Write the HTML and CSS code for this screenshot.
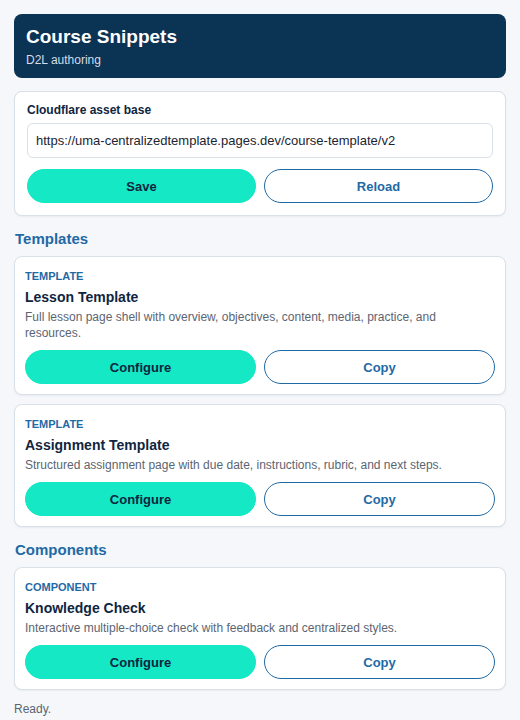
FILE: index.html
```html
<!DOCTYPE html>
<html lang="en">
<head>
<meta charset="utf-8">
<title>Course Snippets</title>
<link rel="stylesheet" href="styles.css">
</head>
<body>
<main class="app">
  <header class="hero">
    <h1 class="hero-title">Course Snippets</h1>
    <p class="hero-sub">D2L authoring</p>
  </header>

  <section class="card config">
    <label class="field-label" for="base">Cloudflare asset base</label>
    <input class="field-input" id="base" type="text" value="https://uma-centralizedtemplate.pages.dev/course-template/v2">
    <div class="actions">
      <button class="btn btn-primary">Save</button>
      <button class="btn btn-outline">Reload</button>
    </div>
  </section>

  <h2 class="section-title">Templates</h2>
  <div class="list">
    <article class="card item">
      <div class="kind">TEMPLATE</div>
      <h3 class="item-title">Lesson Template</h3>
      <p class="item-desc">Full lesson page shell with overview, objectives, content, media, practice, and resources.</p>
      <div class="actions">
        <button class="btn btn-primary">Configure</button>
        <button class="btn btn-outline">Copy</button>
      </div>
    </article>
    <article class="card item">
      <div class="kind">TEMPLATE</div>
      <h3 class="item-title">Assignment Template</h3>
      <p class="item-desc">Structured assignment page with due date, instructions, rubric, and next steps.</p>
      <div class="actions">
        <button class="btn btn-primary">Configure</button>
        <button class="btn btn-outline">Copy</button>
      </div>
    </article>
  </div>

  <h2 class="section-title">Components</h2>
  <div class="list">
    <article class="card item">
      <div class="kind">COMPONENT</div>
      <h3 class="item-title">Knowledge Check</h3>
      <p class="item-desc">Interactive multiple-choice check with feedback and centralized styles.</p>
      <div class="actions">
        <button class="btn btn-primary">Configure</button>
        <button class="btn btn-outline">Copy</button>
      </div>
    </article>
  </div>

  <p class="status">Ready.</p>
</main>
</body>
</html>
```

FILE: styles.css
```css
* { box-sizing: border-box; }

html, body {
  margin: 0;
  padding: 0;
  background: #f5f7fa;
}

body {
  font-family: "Liberation Sans", Arial, sans-serif;
  color: #0f2540;
  padding: 14px;
}

.app {
  display: flex;
  flex-direction: column;
}

.hero {
  background: #0b3354;
  border-radius: 8px;
  padding: 12px 12px 12px;
  color: #ffffff;
  height: 64px;
}

.hero-title {
  margin: 0;
  font-size: 19px;
  font-weight: 700;
  line-height: 22px;
}

.hero-sub {
  margin: 5px 0 0;
  font-size: 12px;
  line-height: 14px;
  color: #d4dde8;
}

.card {
  background: #ffffff;
  border: 1px solid #d9e0e8;
  border-radius: 8px;
  box-shadow: 0 1px 2px rgba(15, 37, 64, 0.06);
}

.config {
  margin-top: 13px;
  padding: 11px 12px 12px;
  display: flex;
  flex-direction: column;
}

.field-label {
  font-size: 12px;
  font-weight: 700;
  line-height: 14px;
  color: #0f2540;
}

.field-input {
  margin-top: 6px;
  height: 35px;
  border: 1px solid #d9e0e8;
  border-radius: 6px;
  padding: 0 8px;
  font-family: "Liberation Sans", Arial, sans-serif;
  font-size: 13px;
  color: #1a2530;
  background: #ffffff;
}

.actions {
  display: grid;
  grid-template-columns: 1fr 1fr;
  gap: 8px;
  margin-top: 11px;
}

.btn {
  height: 34px;
  border-radius: 17px;
  font-family: "Liberation Sans", Arial, sans-serif;
  font-size: 13px;
  font-weight: 700;
  padding: 0;
  cursor: pointer;
}

.btn-primary {
  background: #14e8c4;
  border: 1px solid #14e8c4;
  color: #0f2540;
}

.btn-outline {
  background: #ffffff;
  border: 1px solid #1f6aa5;
  color: #1f6aa5;
}

.section-title {
  margin: 14px 0 8px 1px;
  font-size: 15px;
  font-weight: 700;
  line-height: 18px;
  color: #1f6aa5;
}

.list {
  display: flex;
  flex-direction: column;
  gap: 9px;
}

.item {
  padding: 13px 10px 10px;
}

.kind {
  font-size: 11px;
  font-weight: 700;
  line-height: 13px;
  color: #1f6aa5;
}

.item-title {
  margin: 6px 0 0;
  font-size: 14px;
  font-weight: 700;
  line-height: 16px;
  color: #0f2540;
}

.item-desc {
  margin: 4px 0 0;
  font-size: 12px;
  line-height: 16px;
  color: #5b6572;
}

.item .actions {
  margin-top: 9px;
}

.status {
  margin: 12px 0 0;
  font-size: 12px;
  line-height: 14px;
  color: #5b6572;
}
```
